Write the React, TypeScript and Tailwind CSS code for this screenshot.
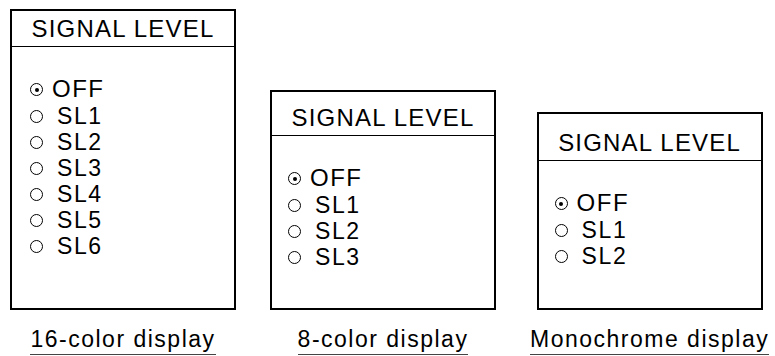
const font = "font-['Liberation_Sans',Arial,sans-serif]";

type PanelProps = {
  levels: number;
  boxH: string;
  headH: string;
  padL: string;
  label: string;
};

function Radio({ checked }: { checked?: boolean }) {
  return (
    <span className="mt-[1px] flex h-[13px] w-[13px] shrink-0 items-center justify-center rounded-full border border-black">
      {checked && <span className="h-[4px] w-[4px] rounded-full bg-black" />}
    </span>
  );
}

function Panel({ levels, boxH, headH, padL, label }: PanelProps) {
  const items = Array.from({ length: levels }, (_, i) => `SL${i + 1}`);
  return (
    <div className="flex flex-col items-center">
      <div className={`w-[226px] border-2 border-black ${boxH}`}>
        <div className={`flex items-end justify-center border-b border-black pb-[5px] text-[24px] leading-none tracking-[1.2px] ${headH}`}>
          SIGNAL LEVEL
        </div>
        <div className={`pt-[28px] ${padL}`}>
          <div className="flex h-[28px] items-center">
            <Radio checked />
            <span className="ml-[9px] text-[24px] tracking-[1.5px]">OFF</span>
          </div>
          {items.map((t) => (
            <div key={t} className="flex h-[26px] items-center">
              <Radio />
              <span className="ml-[14px] text-[23px] tracking-[1.6px]">{t}</span>
            </div>
          ))}
        </div>
      </div>
      <div className="mt-[18px] whitespace-nowrap border-b border-[#444] pb-[3px] text-[23px] leading-none tracking-[1.5px]">
        {label}
      </div>
    </div>
  );
}

export default function App() {
  return (
    <div className={`flex w-[775px] items-end gap-[34px] bg-white pl-[10px] pt-[9px] text-black ${font}`}>
      <Panel levels={6} boxH="h-[301px]" headH="h-[36px]" padL="pl-[18px]" label="16-color display" />
      <Panel levels={3} boxH="h-[220px]" headH="h-[44px]" padL="pl-[16px]" label="8-color display" />
      <Panel levels={2} boxH="h-[198px]" headH="h-[47px]" padL="pl-[16px]" label="Monochrome display" />
    </div>
  );
}
